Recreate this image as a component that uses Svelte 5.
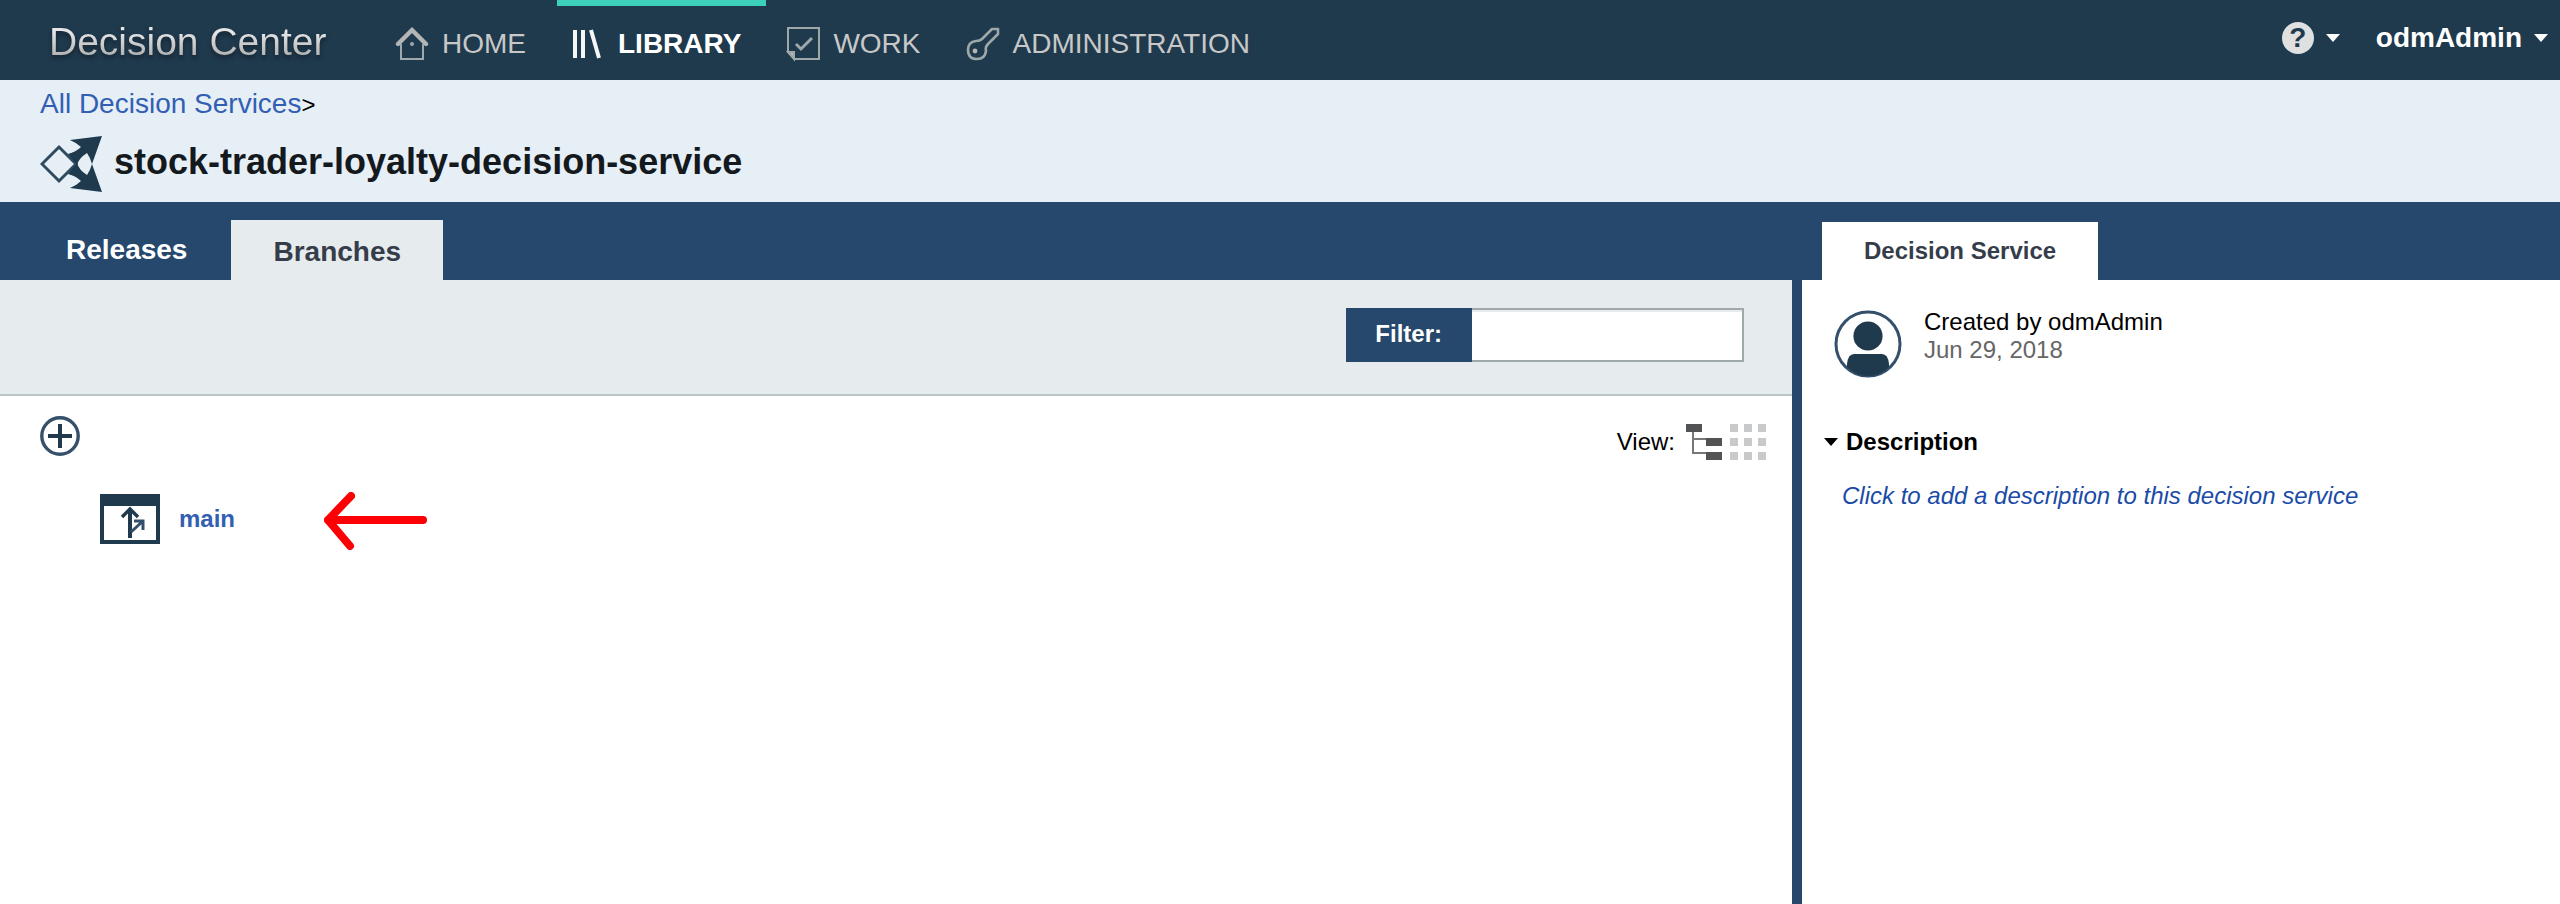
<script>
  const ink = '#1f394d';
  let filter = $state('');
  const dots = [0, 14, 28];
</script>

<div class="page">
  <header class="topbar">
    <div class="brand">Decision Center</div>
    <nav class="menu" aria-label="Main">
      <a href="#home">
        <svg width="34" height="36" viewBox="0 0 34 36" fill="none" stroke="#b4b6b6">
          <path d="M3 18 17 4 31 18" stroke-width="4.4" stroke-linecap="round" />
          <path d="M6 18V33H28V18" stroke-width="2" stroke="#9fa8ad" />
          <circle cx="17" cy="18" r="2" fill="#9fa8ad" stroke="none" />
        </svg>
        <span>HOME</span>
      </a>
      <a href="#library" class="active" aria-current="page">
        <svg width="34" height="36" viewBox="0 0 34 36" fill="none" stroke="#f4f6f7" stroke-width="4">
          <path d="M4 4V32M12 4V32" />
          <path d="M20 4 28 32" />
        </svg>
        <span>LIBRARY</span>
      </a>
      <a href="#work">
        <svg width="34" height="36" viewBox="0 0 34 36" fill="none" stroke="#9fa8a9" stroke-width="2">
          <path d="M2 2H33V33H9L2 26Z" />
          <path d="M2 26H8V33Z" fill="#b4b6b6" />
          <path d="M10 18 15 23 26 12" stroke-width="3" />
        </svg>
        <span>WORK</span>
      </a>
      <a href="#administration">
        <svg width="34" height="36" viewBox="0 0 34 36" fill="none" stroke="#9fa8a9" stroke-width="2.6" stroke-linejoin="round">
          <path d="M10 15Q14 15 16 13L26 3H32V8L22 18Q19 21 20 25Q19 33 11 33Q2 33 2 24Q2 16 10 15Z" />
          <circle cx="9" cy="25" r="2.4" fill="#b4b6b6" stroke="none" />
        </svg>
        <span>ADMINISTRATION</span>
      </a>
    </nav>
    <div class="account">
      <button class="help" aria-label="Help">
        <span class="question">?</span>
        <svg width="14" height="8" viewBox="0 0 14 8"><path d="M0 0H14L7 8Z" fill="#fff" /></svg>
      </button>
      <button class="user">
        odmAdmin
        <svg width="14" height="8" viewBox="0 0 14 8"><path d="M0 0H14L7 8Z" fill="#fff" /></svg>
      </button>
    </div>
  </header>

  <section class="heading">
    <div class="crumbs"><a href="#services">All Decision Services</a><span>&gt;</span></div>
    <div class="title">
      <svg width="62" height="58" viewBox="0 0 62 58">
        <path d="M2 29 19 12 36 29 19 46Z" fill="none" stroke="#2f4a5e" stroke-width="3" />
        <path d="M62 1 30 5Q37 8 41 12Q36 17 28 19L37 30Q39 23 47 18Q50 22 52 29Z" fill={ink} />
        <path d="M62 57 30 53Q37 50 41 46Q36 41 28 39L37 28Q39 35 47 40Q50 36 52 29Z" fill={ink} />
      </svg>
      <h1>stock-trader-loyalty-decision-service</h1>
    </div>
  </section>

  <div class="columns">
    <main>
      <div class="tabs">
        <button class="tab">Releases</button>
        <button class="tab selected">Branches</button>
      </div>
      <form class="filter">
        <label for="filter">Filter:</label>
        <input id="filter" type="text" bind:value={filter} />
      </form>
      <div class="tools">
        <button class="add" aria-label="Add branch">
          <svg width="40" height="40" viewBox="0 0 40 40" fill="none" stroke={ink}>
            <circle cx="20" cy="20" r="18.2" stroke="#35506a" stroke-width="3.4" />
            <path d="M20 8V32M8 20H32" stroke-width="4" />
          </svg>
        </button>
        <div class="view">
          <span>View:</span>
          <button aria-label="Tree view">
            <svg width="36" height="36" viewBox="0 0 36 36">
              <path d="M7 8V29H20M7 15H20" fill="none" stroke="#77787a" stroke-width="2" />
              <path d="M0 0H16V8H0ZM20 14H36V22H20ZM20 28H36V36H20Z" fill="#525355" />
            </svg>
          </button>
          <button aria-label="Grid view">
            <svg width="36" height="36" viewBox="0 0 36 36" fill="#c8c9ca">
              {#each dots as y}
                {#each dots as x}
                  <rect {x} {y} width="8" height="8" />
                {/each}
              {/each}
            </svg>
          </button>
        </div>
      </div>
      <ul class="branches">
        <li>
          <a href="#main">
            <svg width="60" height="50" viewBox="0 0 60 50" fill="none" stroke={ink}>
              <path d="M2 2H58V48H2Z" stroke-width="4" />
              <path d="M0 0H60V12H0Z" fill={ink} stroke="none" />
              <path d="M30 44V16" stroke-width="4" />
              <path d="M22 23 30 15 38 23" stroke-width="3.4" />
              <path d="M31 38 43 27M34 27H43V36" stroke="#35506a" stroke-width="3" />
            </svg>
            main
          </a>
          <svg class="pointer" width="104" height="58" viewBox="0 0 104 58" fill="none" stroke="#fd0006" stroke-width="8" stroke-linecap="round" stroke-linejoin="round">
            <path d="M4 28H99M27 4 4 28 26 54" />
          </svg>
        </li>
      </ul>
    </main>

    <aside>
      <div class="tabs">
        <button class="tab selected">Decision Service</button>
      </div>
      <div class="details">
        <div class="author">
          <svg width="68" height="68" viewBox="0 0 68 68">
            <circle cx="34" cy="34" r="32" fill="none" stroke="#35506a" stroke-width="3" />
            <circle cx="34" cy="26" r="14.6" fill={ink} />
            <path d="M13 57V54Q14 44 20 44H48Q54 44 55 54V57Q46 66 34 66Q22 66 13 57Z" fill={ink} />
          </svg>
          <div>
            <p>Created by odmAdmin</p>
            <p class="date">Jun 29, 2018</p>
          </div>
        </div>
        <button class="toggle" aria-expanded="true">
          <svg width="14" height="8" viewBox="0 0 14 8"><path d="M0 0H14L7 8Z" /></svg>
          Description
        </button>
        <a class="hint" href="#description">Click to add a description to this decision service</a>
      </div>
    </aside>
  </div>
</div>

<style>
  .page {
    min-height: 100vh;
    display: flex;
    flex-direction: column;
    background: #fff;
    color: #000;
    font: 24px/28px "Liberation Sans", Arial, sans-serif;
  }
  svg {
    display: block;
    flex: none;
  }
  a {
    color: #325fb3;
    text-decoration: none;
  }
  button {
    padding: 0;
    border: 0;
    background: none;
    color: inherit;
    font: inherit;
    cursor: pointer;
  }
  p, h1, ul {
    margin: 0;
    padding: 0;
  }
  .topbar {
    display: flex;
    height: 80px;
    background: #1f394d;
    color: #fff;
  }
  .brand {
    width: 332px;
    padding: 20px 0 0 49px;
    font-size: 39px;
    line-height: 44px;
    white-space: nowrap;
    background: linear-gradient(#e6e6e6 40%, #a0a0a0 80%);
    background-clip: text;
    color: transparent;
    filter: drop-shadow(0 3px 2px #14242f);
  }
  .menu {
    display: flex;
    gap: 6px;
  }
  .menu a {
    display: flex;
    align-items: center;
    gap: 13px;
    box-sizing: border-box;
    height: 80px;
    padding: 2px 25px 0 14px;
    border-top: 6px solid transparent;
    color: #c8c8c8;
    font-size: 28px;
  }
  .menu .active {
    border-color: #3cd0bb;
    color: #fff;
    font-weight: bold;
  }
  .account {
    display: flex;
    gap: 36px;
    height: 76px;
    margin-left: auto;
    padding-right: 12px;
    font-size: 28px;
    font-weight: bold;
  }
  .account button {
    display: flex;
    align-items: center;
    gap: 12px;
  }
  .question {
    width: 32px;
    border-radius: 50%;
    background: #dfe1e0;
    color: #1f394d;
    font-size: 28px;
    line-height: 32px;
  }
  .heading {
    height: 122px;
    padding-left: 40px;
    background: #e6eef6;
  }
  .crumbs {
    padding-top: 8px;
    font-size: 28px;
    line-height: 32px;
  }
  .crumbs span {
    font-size: 24px;
  }
  .title {
    display: flex;
    align-items: center;
    gap: 12px;
    padding-top: 14px;
  }
  h1 {
    color: #14191d;
    font-size: 36px;
    line-height: 40px;
    padding-bottom: 4px;
  }
  .columns {
    flex: 1;
    display: grid;
    grid-template-columns: 7fr 3fr;
  }
  .tabs {
    display: flex;
    align-items: flex-end;
    height: 78px;
    background: #26486c;
  }
  .tab {
    color: #fff;
    font-size: 28px;
    font-weight: bold;
    height: 60px;
    padding: 0 42px;
  }
  main .tabs {
    gap: 2px;
    padding-left: 24px;
  }
  .selected {
    background: #e6ebed;
    color: #363d4a;
  }
  main .selected {
    padding-top: 4px;
  }
  .filter {
    display: flex;
    justify-content: flex-end;
    padding: 28px 48px 32px 0;
    border-bottom: 2px solid #bac6c5;
    background: #e6ebed;
  }
  .filter label {
    padding: 0 30px 2px 29px;
    background: #26486c;
    color: #fff;
    font-weight: bold;
    line-height: 52px;
  }
  .filter input {
    box-sizing: border-box;
    width: 272px;
    padding: 0 12px;
    border: 2px solid #9faaa9;
    border-left: 0;
    border-radius: 0;
    background: #fff;
    box-shadow: inset 0 2px #e6ebed;
    font: inherit;
    outline: none;
  }
  .tools {
    display: flex;
    align-items: flex-start;
    justify-content: space-between;
    padding: 20px 26px 0 40px;
  }
  .view {
    display: flex;
    align-items: center;
    gap: 8px;
    padding-top: 8px;
  }
  .view span {
    padding-right: 3px;
  }
  .branches {
    padding: 32px 0 0 100px;
    list-style: none;
  }
  .branches li {
    display: flex;
    align-items: flex-end;
    gap: 89px;
  }
  .branches a {
    display: flex;
    align-items: center;
    gap: 19px;
    padding-bottom: 6px;
    font-weight: bold;
  }
  aside {
    display: flex;
    flex-direction: column;
  }
  aside .tabs {
    padding-left: 30px;
  }
  aside .tab {
    height: 58px;
    background: #fff;
    font-size: 24px;
  }
  .details {
    flex: 1;
    padding: 30px 0 0 22px;
    border-left: 10px solid #26486c;
  }
  .author {
    display: flex;
    gap: 22px;
    padding-left: 10px;
  }
  .author p {
    margin-top: -2px;
    margin-bottom: 2px;
  }
  .author .date {
    color: #666;
  }
  .toggle {
    display: flex;
    align-items: center;
    gap: 8px;
    margin-top: 50px;
    font-weight: bold;
  }
  .hint {
    display: block;
    padding: 26px 0 0 18px;
    color: #1a4ba6;
    font-style: italic;
  }
</style>
